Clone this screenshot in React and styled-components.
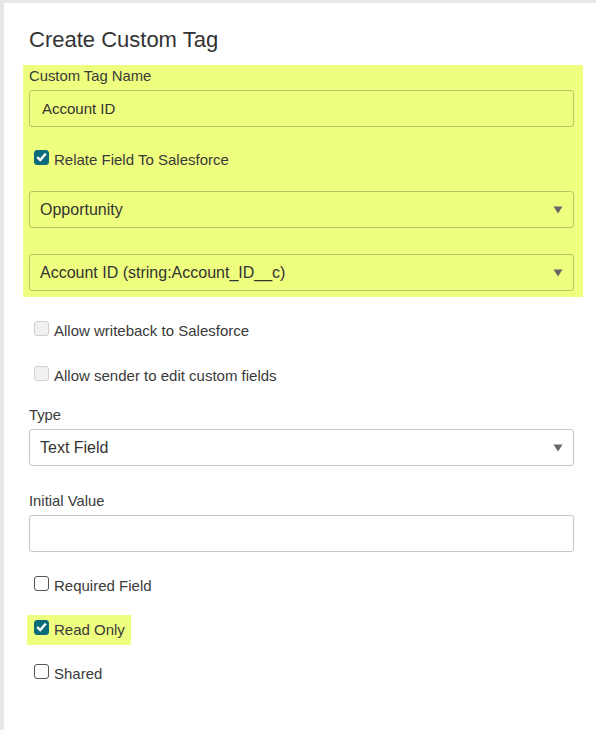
import React from 'react'
import styled, { createGlobalStyle } from 'styled-components'

const GlobalStyle = createGlobalStyle`
  html, body {
    margin: 0;
    padding: 0;
    background: #e7e7e7;
  }
  body {
    font-family: "Liberation Sans", Arial, sans-serif;
    color: #333;
  }
  * {
    box-sizing: border-box;
  }
`

const Panel = styled.div`
  margin: 3px 0 0 4px;
  min-height: 727px;
  padding: 24px 22px 0 25px;
  background: #fff;
  display: flex;
  flex-direction: column;
`

const Title = styled.h2`
  margin: 0 0 12px;
  font-size: 22px;
  line-height: 26px;
  font-weight: normal;
  color: #333;
`

const Highlight = styled.div`
  display: flex;
  flex-direction: column;
  margin: 0 -9px 0 -6px;
  padding: 1px 9px 6px 6px;
  background: #eefe7e;
`

const FieldLabel = styled.label`
  display: block;
  margin-top: ${p => p.$mt || 0}px;
  margin-bottom: 4px;
  font-size: 14.8px;
  line-height: 20px;
  color: #3a3a3a;
`

const TextInput = styled.input`
  display: block;
  width: 100%;
  height: 37px;
  margin: ${p => p.$mt || 0}px 0 0;
  padding: 0 12px;
  border: 1px solid rgba(0, 0, 0, 0.22);
  border-radius: 3px;
  background: transparent;
  font-family: inherit;
  font-size: 15px;
  color: #333;
  outline: none;
`

const SelectBox = styled.div`
  display: flex;
  align-items: center;
  justify-content: space-between;
  height: 37px;
  margin-top: ${p => p.$mt || 0}px;
  padding: 0 10px 0 10px;
  border: 1px solid rgba(0, 0, 0, 0.22);
  border-radius: 3px;
  font-size: 16px;
  color: #333;
  svg {
    display: block;
    margin-top: 1px;
  }
`

const CheckRow = styled.div`
  display: ${p => (p.$marked ? 'inline-flex' : 'flex')};
  align-self: flex-start;
  align-items: center;
  height: 30px;
  margin-top: ${p => p.$mt || 0}px;
  margin-left: ${p => (p.$marked ? -2 : 5)}px;
  padding: ${p => (p.$marked ? '0 6px 0 7px' : '0')};
  background: ${p => (p.$marked ? '#eefe7e' : 'transparent')};
  font-size: 15px;
  line-height: 20px;
  color: #3a3a3a;
`

const Box = styled.span`
  display: flex;
  align-items: center;
  justify-content: center;
  width: 15px;
  height: 15px;
  margin: 0 5px 6px 0;
  border-radius: 3px;
  border: 1px solid
    ${p => (p.$checked ? '#0b6b78' : p.$disabled ? '#cfcfcf' : '#555')};
  background: ${p => (p.$checked ? '#0b6b78' : p.$disabled ? '#f1f1f1' : '#fff')};
`

const Arrow = () => (
  <svg width="10" height="8" viewBox="0 0 10 8">
    <polygon points="0.5,0.5 9.5,0.5 5,7.5" fill="#666" />
  </svg>
)

const Check = ({ checked, disabled, children, mt, marked }) => (
  <CheckRow $mt={mt} $marked={marked}>
    <Box $checked={checked} $disabled={disabled}>
      {checked && (
        <svg width="11" height="10" viewBox="0 0 11 10">
          <path d="M1.2 5.2 L4.2 8 L9.8 1.6" fill="none" stroke="#fff" strokeWidth="2.4" />
        </svg>
      )}
    </Box>
    {children}
  </CheckRow>
)

const Select = ({ value, mt }) => (
  <SelectBox $mt={mt}>
    <span>{value}</span>
    <Arrow />
  </SelectBox>
)

export default function App() {
  return (
    <>
      <GlobalStyle />
      <Panel>
        <Title>Create Custom Tag</Title>
        <Highlight>
          <FieldLabel>Custom Tag Name</FieldLabel>
          <TextInput defaultValue="Account ID" />
          <Check checked mt={18}>Relate Field To Salesforce</Check>
          <Select value="Opportunity" mt={16} />
          <Select value="Account ID (string:Account_ID__c)" mt={26} />
        </Highlight>
        <Check disabled mt={19}>Allow writeback to Salesforce</Check>
        <Check disabled mt={15}>Allow sender to edit custom fields</Check>
        <FieldLabel $mt={14}>Type</FieldLabel>
        <Select value="Text Field" />
        <FieldLabel $mt={25}>Initial Value</FieldLabel>
        <TextInput />
        <Check mt={19}>Required Field</Check>
        <Check checked marked mt={14}>Read Only</Check>
        <Check mt={14}>Shared</Check>
      </Panel>
    </>
  )
}
